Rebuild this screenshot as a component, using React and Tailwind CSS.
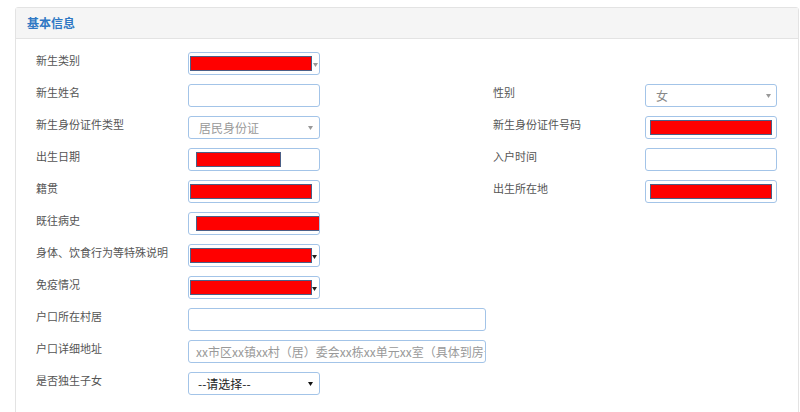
import React from "react";

const font = { fontFamily: '"Noto Sans CJK SC", "Noto Sans", sans-serif' };

function Arrow({ color = "#888", className = "" }) {
  return (
    <svg width="5" height="4" viewBox="0 0 5 4" className={className}>
      <polygon points="0,0 5,0 2.5,4" fill={color} />
    </svg>
  );
}

function Red({ w = 122, ml = 1 }) {
  return (
    <div
      className="h-[15px] bg-[#ff0000] border border-[#4b5f86] shrink-0"
      style={{ width: w, marginLeft: ml }}
    />
  );
}

function Box({ children, wide = false }) {
  return (
    <div
      className={`${wide ? "w-[298px]" : "w-[132px]"} h-[23px] border border-[#a3c4e8] rounded-[3px] bg-white flex items-center relative overflow-hidden shrink-0`}
    >
      {children}
    </div>
  );
}

function Label({ children }) {
  return (
    <div className="w-[152px] shrink-0 text-[11px] leading-[14px] text-[#555] pt-[1px]">
      {children}
    </div>
  );
}

function Row({ left, right }) {
  return (
    <div className="h-[32px] flex items-start">
      <div className="flex items-start w-[457px] shrink-0">{left}</div>
      {right && <div className="flex items-start">{right}</div>}
    </div>
  );
}

export default function App() {
  return (
    <div className="w-[800px] h-[412px] bg-white overflow-hidden pt-[7px]" style={font}>
      <div className="ml-[15px] w-[784px] h-[420px] border border-[#e3e3e3] rounded-[3px]">
        <div className="h-[31px] bg-[#f5f5f5] border-b border-[#e3e3e3] flex items-center pl-[11px]">
          <span className="text-[12px] font-bold text-[#2f78c4]">基本信息</span>
        </div>
        <div className="pl-[20px] pt-[13px]">
          <Row
            left={
              <>
                <Label>新生类别</Label>
                <Box>
                  <Red />
                  <Arrow color="#999" className="ml-[1px] mt-[2px]" />
                </Box>
              </>
            }
          />
          <Row
            left={
              <>
                <Label>新生姓名</Label>
                <Box />
              </>
            }
            right={
              <>
                <Label>性别</Label>
                <Box>
                  <span className="text-[12px] text-[#888] pl-[10px] flex-1">女</span>
                  <Arrow color="#999" className="mr-[5px]" />
                </Box>
              </>
            }
          />
          <Row
            left={
              <>
                <Label>新生身份证件类型</Label>
                <Box>
                  <span className="text-[12px] text-[#999] pl-[10px] flex-1">居民身份证</span>
                  <Arrow color="#999" className="mr-[6px]" />
                </Box>
              </>
            }
            right={
              <>
                <Label>新生身份证件号码</Label>
                <Box>
                  <Red w={122} ml={4} />
                </Box>
              </>
            }
          />
          <Row
            left={
              <>
                <Label>出生日期</Label>
                <Box>
                  <Red w={85} ml={7} />
                </Box>
              </>
            }
            right={
              <>
                <Label>入户时间</Label>
                <Box />
              </>
            }
          />
          <Row
            left={
              <>
                <Label>籍贯</Label>
                <Box>
                  <Red />
                </Box>
              </>
            }
            right={
              <>
                <Label>出生所在地</Label>
                <Box>
                  <Red w={122} ml={4} />
                </Box>
              </>
            }
          />
          <Row
            left={
              <>
                <Label>既往病史</Label>
                <Box>
                  <Red w={124} ml={7} />
                </Box>
              </>
            }
          />
          <Row
            left={
              <>
                <Label>身体、饮食行为等特殊说明</Label>
                <Box>
                  <Red />
                  <Arrow color="#222" className="mt-[3px]" />
                </Box>
              </>
            }
          />
          <Row
            left={
              <>
                <Label>免疫情况</Label>
                <Box>
                  <Red />
                  <Arrow color="#222" className="mt-[3px]" />
                </Box>
              </>
            }
          />
          <Row
            left={
              <>
                <Label>户口所在村居</Label>
                <Box wide />
              </>
            }
          />
          <Row
            left={
              <>
                <Label>户口详细地址</Label>
                <Box wide>
                  <span className="text-[12px] text-[#999] pl-[7px] whitespace-nowrap">
                    xx市区xx镇xx村（居）委会xx栋xx单元xx室（具体到房号）
                  </span>
                </Box>
              </>
            }
          />
          <Row
            left={
              <>
                <Label>是否独生子女</Label>
                <Box>
                  <span className="text-[12px] text-[#222] pl-[9px] flex-1">--请选择--</span>
                  <Arrow color="#111" className="mr-[6px]" />
                </Box>
              </>
            }
          />
        </div>
      </div>
    </div>
  );
}
